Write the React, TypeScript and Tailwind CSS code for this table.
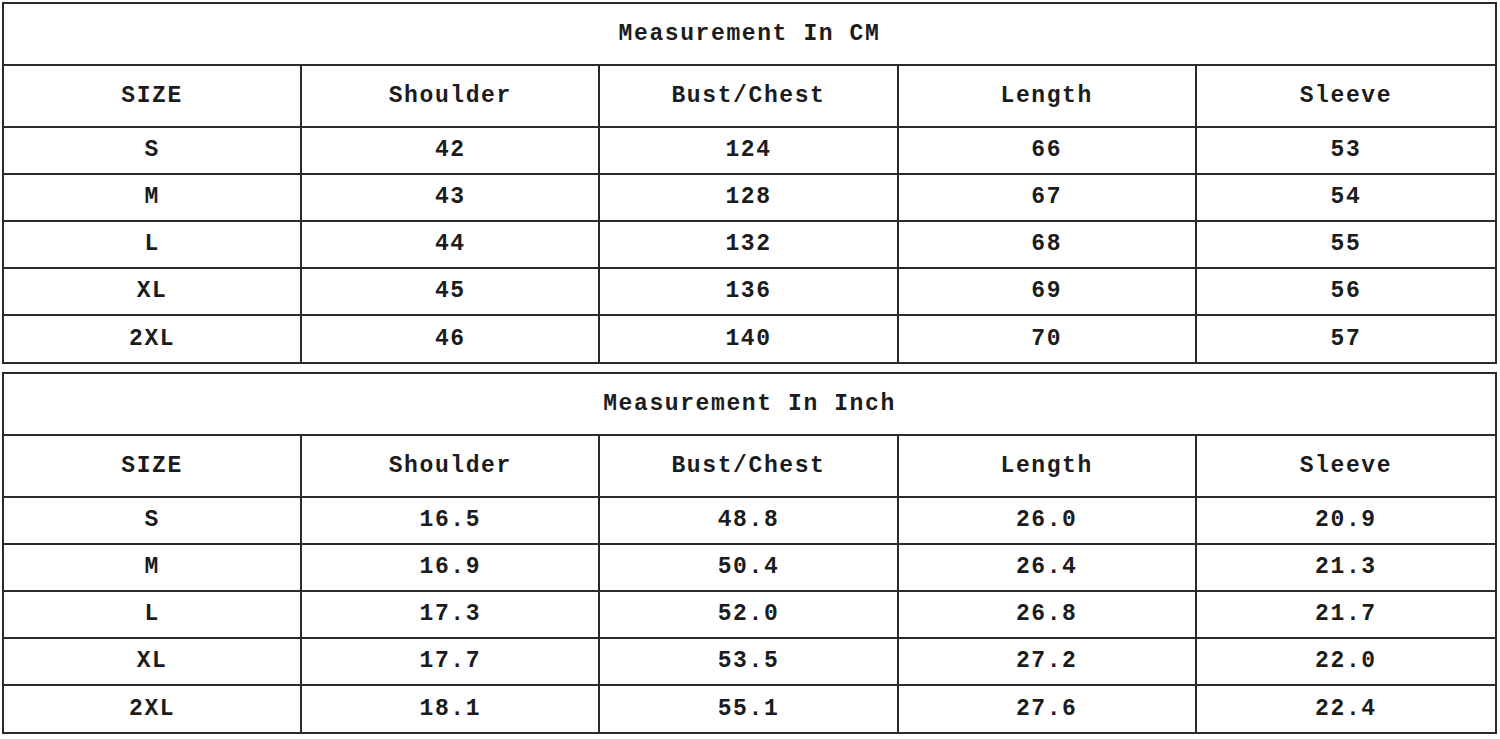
const COLS = ["SIZE", "Shoulder", "Bust/Chest", "Length", "Sleeve"];

const CM_ROWS = [
  ["S", "42", "124", "66", "53"],
  ["M", "43", "128", "67", "54"],
  ["L", "44", "132", "68", "55"],
  ["XL", "45", "136", "69", "56"],
  ["2XL", "46", "140", "70", "57"],
];

const INCH_ROWS = [
  ["S", "16.5", "48.8", "26.0", "20.9"],
  ["M", "16.9", "50.4", "26.4", "21.3"],
  ["L", "17.3", "52.0", "26.8", "21.7"],
  ["XL", "17.7", "53.5", "27.2", "22.0"],
  ["2XL", "18.1", "55.1", "27.6", "22.4"],
];

function SizeTable({ title, rows }: { title: string; rows: string[][] }) {
  return (
    <div className="w-[1495px] border-2 border-[#2a2a2a] bg-white">
      <div className="h-[62px] flex items-center justify-center border-b-2 border-[#2a2a2a]">
        {title}
      </div>
      <div className="grid grid-cols-5 h-[62px] border-b-2 border-[#2a2a2a]">
        {COLS.map((c, i) => (
          <div
            key={c}
            className={`flex items-center justify-center ${i < 4 ? "border-r-2 border-[#2a2a2a]" : ""}`}
          >
            {c}
          </div>
        ))}
      </div>
      {rows.map((row, r) => (
        <div
          key={row[0]}
          className={`grid grid-cols-5 ${r < rows.length - 1 ? "h-[47px] border-b-2 border-[#2a2a2a]" : "h-[46px]"}`}
        >
          {row.map((v, i) => (
            <div
              key={i}
              className={`flex items-center justify-center ${i < 4 ? "border-r-2 border-[#2a2a2a]" : ""}`}
            >
              {v}
            </div>
          ))}
        </div>
      ))}
    </div>
  );
}

export default function App() {
  return (
    <div className="w-[1500px] h-[739px] bg-white pl-[2px] pt-[2px] font-['Liberation_Mono',monospace] text-[23px] font-bold text-[#1c1c1c] tracking-[1.6px]">
      <SizeTable title="Measurement In CM" rows={CM_ROWS} />
      <div className="h-[8px]" />
      <SizeTable title="Measurement In Inch" rows={INCH_ROWS} />
    </div>
  );
}
